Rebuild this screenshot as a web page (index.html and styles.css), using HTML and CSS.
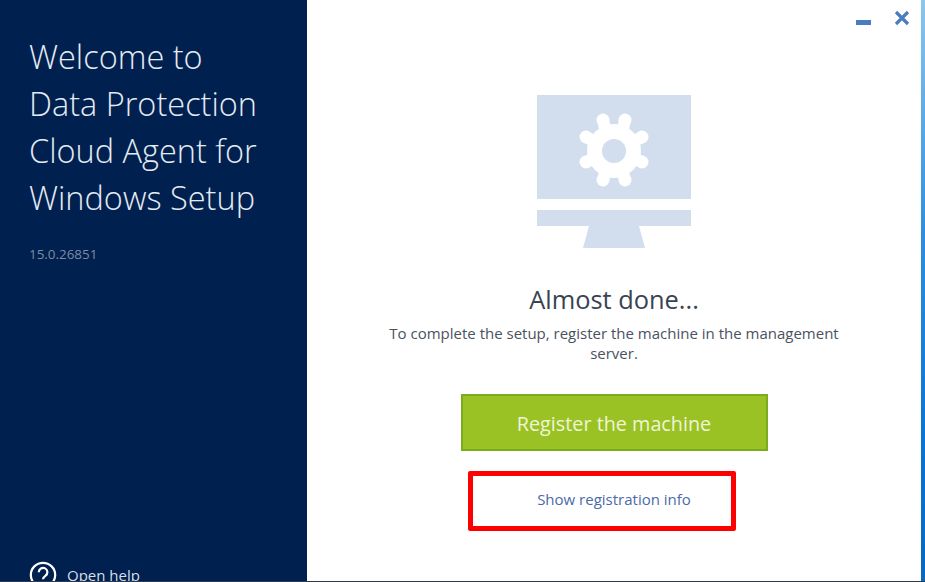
FILE: index.html
```html
<!DOCTYPE html>
<html lang="en">
<head>
<meta charset="utf-8">
<title>Data Protection Cloud Agent Setup</title>
<link rel="stylesheet" href="styles.css">
</head>
<body>
<div class="screen">
  <div class="window">
    <aside class="sidebar">
      <h1 class="welcome">Welcome to<br>Data Protection<br>Cloud Agent for<br>Windows Setup</h1>
      <p class="version">15.0.26851</p>
      <a class="help">
        <svg class="help-icon" width="28" height="28" viewBox="0 0 28 28" aria-hidden="true">
          <circle cx="14" cy="14" r="12.2" fill="none" stroke="#fff" stroke-width="2.2"/>
          <path d="M9.8 11.2a4.3 4.3 0 1 1 6.6 3.6c-1.5 1-2.4 1.8-2.4 3.4" fill="none" stroke="#fff" stroke-width="2.2"/>
          <circle cx="14" cy="21.4" r="1.4" fill="#fff"/>
        </svg>
        <span>Open help</span>
      </a>
    </aside>
    <main class="content">
      <div class="controls">
        <svg width="16" height="8" viewBox="0 0 16 8" aria-hidden="true"><rect y="0" width="15" height="5" fill="#4a7cc0"/></svg>
        <svg width="16" height="16" viewBox="0 0 16 16" aria-hidden="true"><path d="M2 2l12 12M14 2L2 14" stroke="#4a7cc0" stroke-width="3.2" fill="none"/></svg>
      </div>
      <svg class="monitor" width="154" height="153" viewBox="0 0 154 153" aria-hidden="true">
        <rect width="154" height="104" fill="#d2deee"/>
        <rect y="115" width="154" height="16" fill="#d2deee"/>
        <path d="M52 131h50l6 22H46z" fill="#d2deee"/>
        <g fill="#fff">
          <circle cx="77" cy="56" r="27"/>
          <circle cx="66" cy="25" r="6.5"/><circle cx="88" cy="25" r="6.5"/>
          <circle cx="49" cy="42" r="6.5"/><circle cx="105" cy="42" r="6.5"/>
          <circle cx="49" cy="67" r="6.5"/><circle cx="105" cy="67" r="6.5"/>
          <circle cx="66" cy="85" r="6.5"/><circle cx="88" cy="85" r="6.5"/>
        </g>
        <g stroke="#fff" stroke-width="12">
          <path d="M69 38L66 25M85 38L88 25M60 48L49 42M94 48L105 42M60 62L49 67M94 62L105 67M69 74L66 85M85 74L88 85"/>
        </g>
        <circle cx="77" cy="56" r="12" fill="#d2deee"/>
      </svg>
      <h2 class="done">Almost done...</h2>
      <p class="message">To complete the setup, register the machine in the management server.</p>
      <button class="register" type="button">Register the machine</button>
      <a class="info">Show registration info</a>
    </main>
    <div class="desktop"></div>
  </div>
  <div class="taskbar"></div>
</div>
</body>
</html>
```
FILE: styles.css
```css
* { box-sizing: border-box; }
html, body { margin: 0; height: 582px; overflow: hidden; background: #fff; }
.screen { width: 925px; height: 582px; display: flex; flex-direction: column; font-family: "Open Sans", "Noto Sans", sans-serif; }
.window { flex: 1; min-height: 0; display: flex; }
.taskbar { height: 1px; background: #2d3a48; }

.sidebar { width: 307px; background: #00204f; padding: 33px 0 0 29px; display: flex; flex-direction: column; overflow: hidden; }
.welcome { margin: 0; font-size: 32.5px; line-height: 47px; font-weight: 300; color: #e4ebf3; white-space: nowrap; }
.version { margin: 25px 0 0; font-size: 13.4px; line-height: 16px; color: #7d8ba3; }
.help { margin-top: auto; margin-bottom: -8px; display: flex; align-items: center; gap: 10px; font-size: 15px; color: #d5deea; }
.help-icon { flex: none; }

.content { flex: 1; display: flex; flex-direction: column; align-items: center; padding: 10px 15px 0; }
.controls { align-self: flex-end; height: 17px; margin: 0 -4px 68px 0; display: flex; gap: 22px; align-items: flex-start; }
.controls svg:first-child { margin-top: 10px; }
.monitor { flex: none; }
.done { margin: 35px 0 0; font-size: 25.4px; line-height: 32px; font-weight: 400; color: #3a4352; }
.message { margin: 8px 0 0; width: 460px; text-align: center; font-size: 15px; line-height: 20px; color: #4a5260; }
.register { margin-top: 31px; width: 307px; height: 57px; padding: 2px 0 0; background: #9bc225; border: 2px solid #79ad1e; color: #eef5d6; font: 400 19.8px "Open Sans", sans-serif; }
.info { margin: 20px 24px 0 0; width: 268px; height: 60px; padding: 0 0 4px 24px; border: 5px solid #f00; border-radius: 2px; display: flex; align-items: center; justify-content: center; font-size: 15px; color: #4a6aa8; }

.desktop { width: 4px; background: linear-gradient(#8cc6ee, #2f8fdc 40%, #0c74d4 75%, #0a68bf); }
```
